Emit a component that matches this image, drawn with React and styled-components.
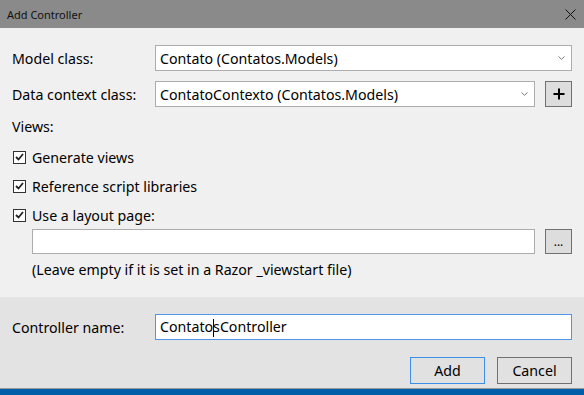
import styled, { createGlobalStyle } from 'styled-components';

const Global = createGlobalStyle`
  html, body { margin: 0; padding: 0; }
  body { font-family: "Noto Sans", "Open Sans", sans-serif; }
`;

const Window = styled.div`
  width: 584px;
  height: 395px;
  display: flex;
  flex-direction: column;
  overflow: hidden;
  color: #000;
`;

const TitleBar = styled.div`
  height: 28px;
  flex: none;
  background: #8a8a8a;
  display: flex;
  align-items: center;
  justify-content: space-between;
  padding: 0 8px 0 7px;
  font-size: 11px;
  color: #111;
`;

const Body = styled.div`
  background: #f0f0f0;
  height: 269px;
  flex: none;
  box-sizing: border-box;
  padding: 17px 12px 0 12px;
  display: flex;
  flex-direction: column;
  font-size: 14.2px;
`;

const Footer = styled.div`
  background: #e3e3e3;
  height: 92px;
  flex: none;
  box-sizing: border-box;
  padding: 17px 12px 0 12px;
  display: flex;
  flex-direction: column;
  font-size: 14.2px;
  border-bottom: 1px solid #9a9a9a;
`;

const Taskbar = styled.div`
  flex: 1;
  background: #005ea8;
`;

const Row = styled.div`
  display: flex;
  align-items: center;
  gap: 10px;
  margin-top: ${p => p.$mt || 0}px;
  padding-left: ${p => p.$indent || 0}px;
`;

const Label = styled.div`
  width: 133px;
  flex: none;
`;

const Combo = styled.div`
  flex: 1;
  height: 26px;
  box-sizing: border-box;
  border: 1px solid #adadad;
  background: #fff;
  display: flex;
  align-items: center;
  justify-content: space-between;
  padding: 0 6px 0 4px;
`;

const TextBox = styled.div`
  flex: 1;
  height: ${p => p.$h || 25}px;
  box-sizing: border-box;
  border: 1px solid ${p => (p.$focus ? '#4d97e8' : '#adadad')};
  background: #fff;
  display: flex;
  align-items: center;
  padding: 0 4px;
`;

const Caret = styled.span`
  display: inline-block;
  width: 1px;
  height: 18px;
  background: #000;
  vertical-align: middle;
  margin: 0 -1px 0 0;
`;

const Square = styled.button`
  width: 27px;
  height: ${p => p.$h || 26}px;
  flex: none;
  box-sizing: border-box;
  border: 1px solid #707070;
  background: #dddddd;
  padding: 0;
  display: flex;
  align-items: center;
  justify-content: center;
  font-family: inherit;
  font-size: 12px;
  color: #000;
`;

const Text = styled.div`
  line-height: 20px;
  margin-top: ${p => p.$mt || 0}px;
  padding-left: ${p => p.$indent || 0}px;
`;

const CheckRow = styled.label`
  display: flex;
  align-items: center;
  gap: 6px;
  height: 20px;
  margin-top: ${p => p.$mt || 0}px;
  padding-left: 1px;
`;

const Box = styled.span`
  width: 13px;
  height: 13px;
  box-sizing: border-box;
  border: 1px solid #333;
  background: #fff;
  display: flex;
  align-items: center;
  justify-content: center;
  flex: none;
`;

const Actions = styled.div`
  display: flex;
  justify-content: flex-end;
  gap: 12px;
  margin-top: 17px;
`;

const Button = styled.button`
  width: 75px;
  height: 27px;
  box-sizing: border-box;
  border: 1px solid ${p => (p.$primary ? '#3d8ee6' : '#707070')};
  background: #e1e1e1;
  font-family: inherit;
  font-size: 14.2px;
  color: #000;
  padding: 0;
`;

const Chevron = () => (
  <svg width="7" height="4" viewBox="0 0 7 4">
    <path d="M0.5 0.5 L3.5 3.3 L6.5 0.5" fill="none" stroke="#7a7a7a" strokeWidth="1" />
  </svg>
);

const Check = () => (
  <svg width="9" height="8" viewBox="0 0 9 8">
    <path d="M1 4 L3.5 6.5 L8 1" fill="none" stroke="#222" strokeWidth="1.8" />
  </svg>
);

const CloseIcon = () => (
  <svg width="11" height="11" viewBox="0 0 11 11">
    <path d="M0.5 0.5 L10.5 10.5 M10.5 0.5 L0.5 10.5" stroke="#111" strokeWidth="1" />
  </svg>
);

const PlusIcon = () => (
  <svg width="12" height="12" viewBox="0 0 12 12">
    <path d="M6 0.5 V11.5 M0.5 6 H11.5" stroke="#000" strokeWidth="2" />
  </svg>
);

const App = () => {
  return (
    <>
      <Global />
      <Window>
        <TitleBar>
          <span>Add Controller</span>
          <CloseIcon />
        </TitleBar>
        <Body>
          <Row>
            <Label>Model class:</Label>
            <Combo>
              <span>Contato (Contatos.Models)</span>
              <Chevron />
            </Combo>
          </Row>
          <Row $mt={10}>
            <Label>Data context class:</Label>
            <Combo>
              <span>ContatoContexto (Contatos.Models)</span>
              <Chevron />
            </Combo>
            <Square>
              <PlusIcon />
            </Square>
          </Row>
          <Text $mt={10}>Views:</Text>
          <CheckRow $mt={10}>
            <Box><Check /></Box>
            Generate views
          </CheckRow>
          <CheckRow $mt={9}>
            <Box><Check /></Box>
            Reference script libraries
          </CheckRow>
          <CheckRow $mt={9}>
            <Box><Check /></Box>
            Use a layout page:
          </CheckRow>
          <Row $mt={4} $indent={20}>
            <TextBox />
            <Square $h={25}>...</Square>
          </Row>
          <Text $mt={6} $indent={20}>(Leave empty if it is set in a Razor _viewstart file)</Text>
        </Body>
        <Footer>
          <Row>
            <Label>Controller name:</Label>
            <TextBox $focus $h={26}>
              <span>Contato<Caret />sController</span>
            </TextBox>
          </Row>
          <Actions>
            <Button $primary>Add</Button>
            <Button>Cancel</Button>
          </Actions>
        </Footer>
        <Taskbar />
      </Window>
    </>
  );
};

export default App;
